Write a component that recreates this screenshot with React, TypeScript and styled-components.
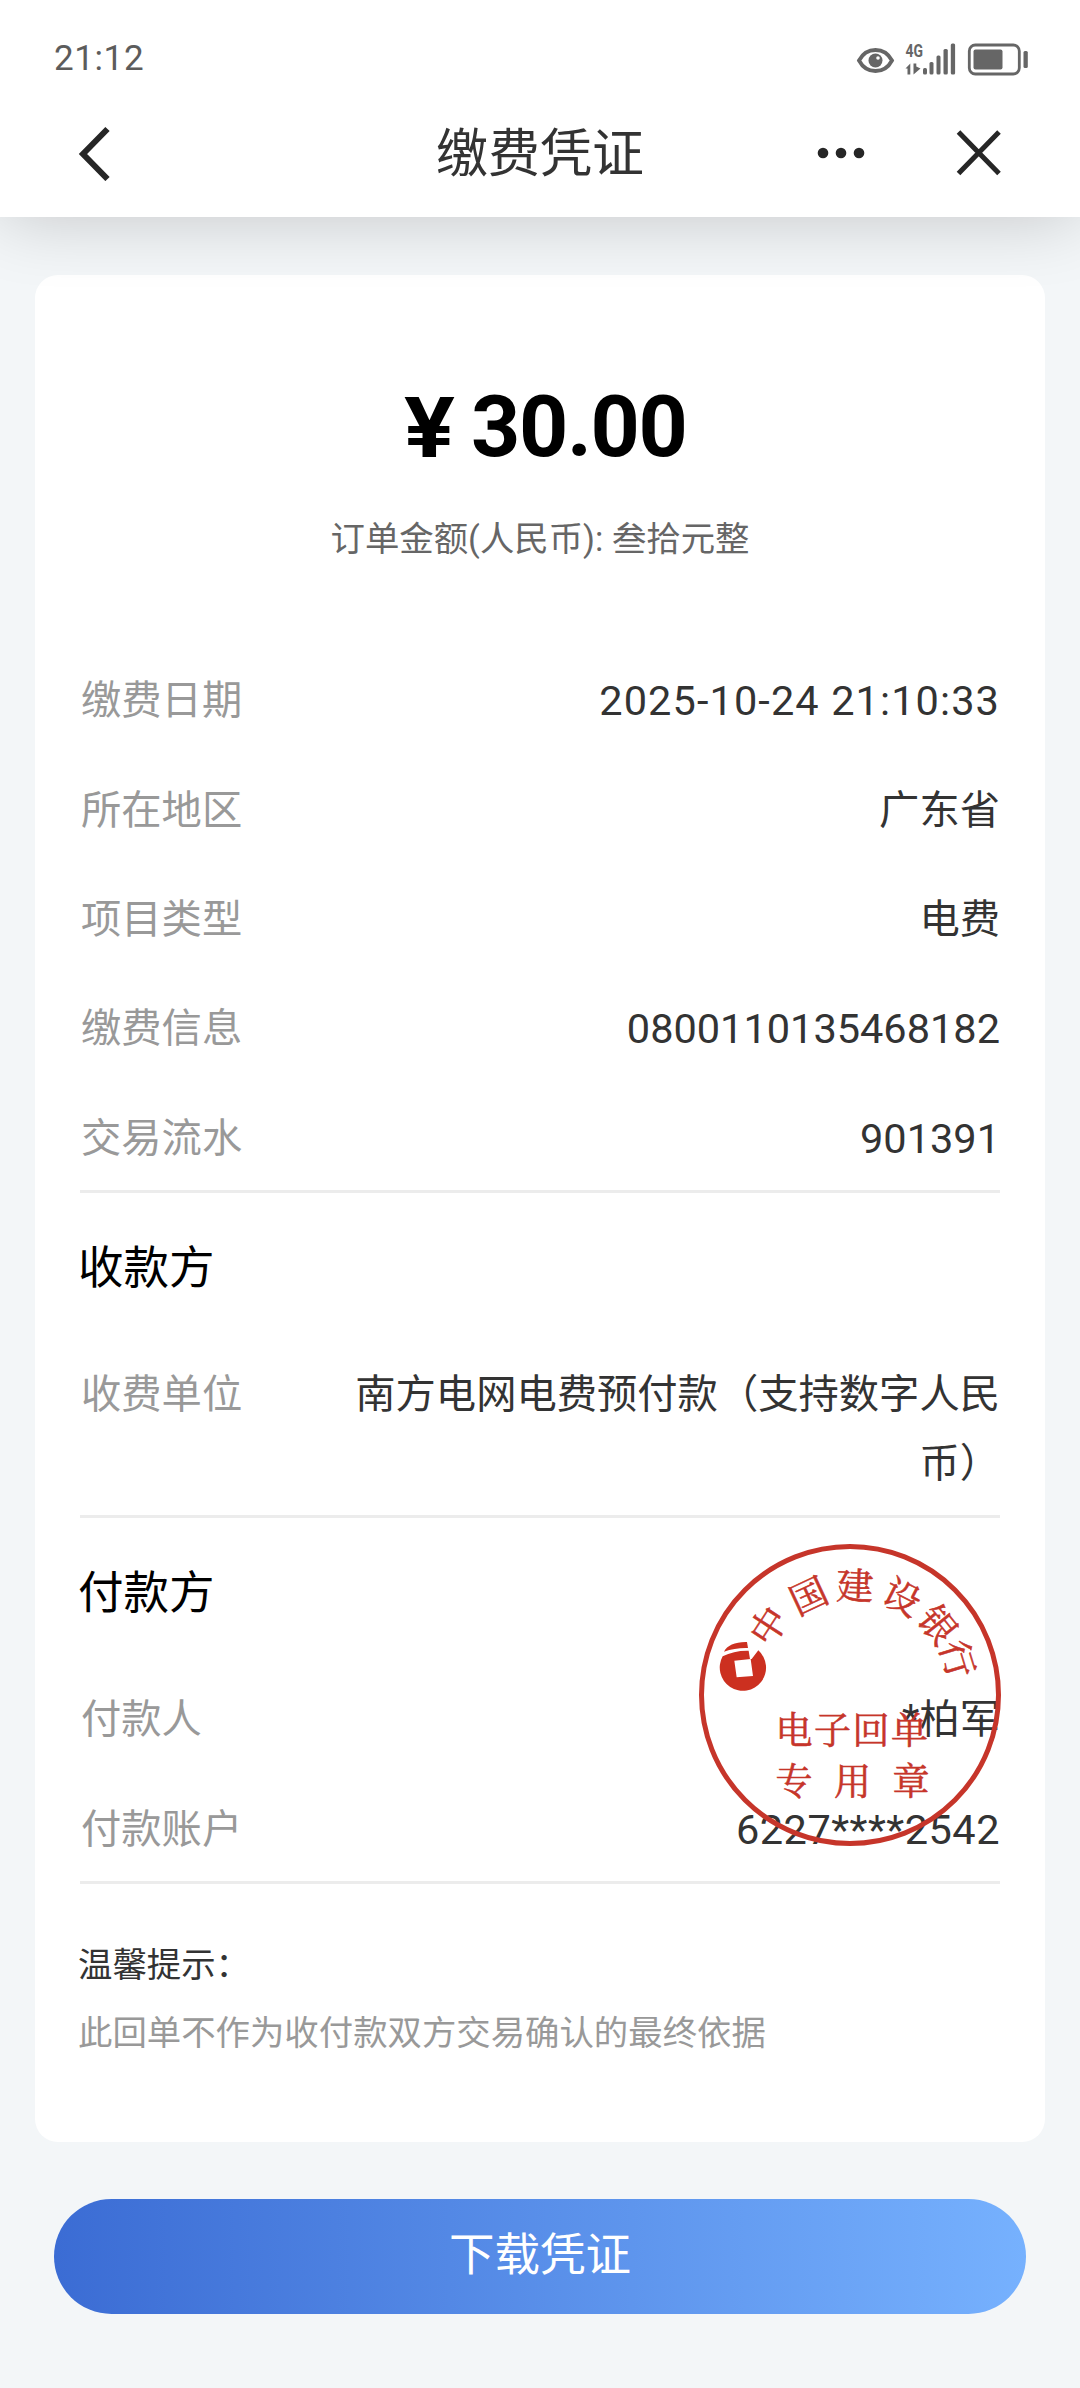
import React, { FC } from 'react'
import styled, { createGlobalStyle } from 'styled-components'

interface IRow {
	label: string
	value: string
	fontSize?: number
	spacing?: number
}

interface ISealChar {
	char: string
	x: number
	y: number
	angle: number
}

const paymentRows: IRow[] = [
	{ label: '缴费日期', value: '2025-10-24 21:10:33', fontSize: 41.5, spacing: 1.1 },
	{ label: '所在地区', value: '广东省' },
	{ label: '项目类型', value: '电费' },
	{ label: '缴费信息', value: '0800110135468182', fontSize: 41.5 },
	{ label: '交易流水', value: '901391', fontSize: 41.5 },
]

const payeeRows: IRow[] = [{ label: '收费单位', value: '南方电网电费预付款（支持数字人民币）' }]

const payerRows: IRow[] = [
	{ label: '付款人', value: '*柏军' },
	{ label: '付款账户', value: '6227****2542', fontSize: 41.5, spacing: 0.5 },
]

const sealChars: ISealChar[] = [
	{ char: '中', x: 69.5, y: 82, angle: -57 },
	{ char: '国', x: 109.5, y: 52, angle: -25 },
	{ char: '建', x: 156, y: 42, angle: 2 },
	{ char: '设', x: 203, y: 53, angle: 27 },
	{ char: '银', x: 239, y: 81, angle: 51 },
	{ char: '行', x: 258.5, y: 115, angle: 73 },
]

const StatusIcons: FC = () => (
	<StatusSvg viewBox="0 0 172 34">
		<path
			d="M3 18.5C7 11 13.5 8 19.5 8S32 11 36 18.5C32 26 25.5 29 19.5 29S7 26 3 18.5Z"
			fill="none"
			stroke="#666"
			strokeWidth="3.8"
		/>
		<circle cx="19.5" cy="18.5" r="7" fill="#666" />
		<circle cx="22" cy="16" r="1.8" fill="#fff" />
		<SignalText x="49.5" y="15.3" textLength="17.5" lengthAdjust="spacingAndGlyphs">
			4G
		</SignalText>
		<path d="M49.5 26.5 54.3 21.5V32.5H51.5V26.5ZM57.5 21.5H60.3V24.5L64.5 26.5 57.5 32.5Z" fill="#666" />
		<g fill="#666">
			<rect x="67" y="26" width="4" height="6.5" rx="1.5" />
			<rect x="73.5" y="20" width="4" height="12.5" rx="1.5" />
			<rect x="80.5" y="13.5" width="4" height="19" rx="1.5" />
			<rect x="87.5" y="7" width="4.3" height="25.5" rx="1.5" />
			<rect x="94.8" y="1.5" width="4.3" height="31" rx="1.5" />
		</g>
		<rect x="113.3" y="3" width="50" height="29" rx="6" fill="none" stroke="#666" strokeWidth="2.8" />
		<rect x="117.5" y="7.5" width="29" height="20" rx="2" fill="#666" />
		<rect x="167.5" y="9" width="4.3" height="17" rx="1.5" fill="#666" />
	</StatusSvg>
)

const BackIcon: FC = () => (
	<svg width="32" height="56" viewBox="0 0 32 56">
		<path d="M29.5 4 5 29 29.5 54" fill="none" stroke="#262626" strokeWidth="6" />
	</svg>
)

const MoreIcon: FC = () => (
	<svg width="48" height="12" viewBox="0 0 48 12" fill="#262626">
		<circle cx="6" cy="6" r="5.3" />
		<circle cx="24" cy="6" r="5.3" />
		<circle cx="42" cy="6" r="5.3" />
	</svg>
)

const CloseIcon: FC = () => (
	<svg width="46" height="46" viewBox="0 0 46 46">
		<path d="M2.5 2 43 43.5M43 2 2.5 43.5" stroke="#262626" strokeWidth="5" />
	</svg>
)

const Seal: FC = () => (
	<SealBox viewBox="0 0 304 304">
		<circle cx="151" cy="151" r="148.5" fill="none" stroke="#c6352a" strokeWidth="5" />
		<g transform="translate(-20 36) scale(.3333)">
			<path d="M135 215C144 196 170 185 204 186L207 204C183 203 158 207 135 215Z" fill="#cc3020" />
			<path
				fillRule="evenodd"
				d="M131 229Q165 211 209 212L213 237H218L238 211A69.5 69.5 0 1 1 131 229ZM166 242 173 292 222 288 215 237Z"
				fill="#cc3020"
			/>
		</g>
		{sealChars.map(item => (
			<SealText
				key={item.char}
				transform={`translate(${item.x} ${item.y}) rotate(${item.angle})`}
				y="13.5">
				{item.char}
			</SealText>
		))}
		{['电', '子', '回', '单'].map((char, index) => (
			<SealText key={char} x={95 + index * 38.5} y="199.5">
				{char}
			</SealText>
		))}
		{['专', '用', '章'].map((char, index) => (
			<SealText key={char} x={95 + index * 58.5} y="251">
				{char}
			</SealText>
		))}
	</SealBox>
)

const Rows: FC<{ items: IRow[] }> = ({ items }) => (
	<RowList>
		{items.map(item => (
			<Row key={item.label}>
				<Label>{item.label}</Label>
				<Value $fontSize={item.fontSize} $spacing={item.spacing}>
					{item.value}
				</Value>
			</Row>
		))}
	</RowList>
)

const App: FC = () => {
	return (
		<Root>
			<GlobalStyle />
			<Header>
				<StatusBar>
					<Time>21:12</Time>
					<StatusIcons />
				</StatusBar>
				<NavBar>
					<NavSide>
						<IconButton aria-label="返回">
							<BackIcon />
						</IconButton>
					</NavSide>
					<Title>缴费凭证</Title>
					<NavSide $end>
						<IconButton aria-label="更多">
							<MoreIcon />
						</IconButton>
						<IconButton aria-label="关闭">
							<CloseIcon />
						</IconButton>
					</NavSide>
				</NavBar>
			</Header>
			<Card>
				<Amount>
					<Currency>¥</Currency>
					30.00
				</Amount>
				<AmountText>订单金额(人民币): 叁拾元整</AmountText>
				<Section>
					<Rows items={paymentRows} />
				</Section>
				<Section>
					<SectionTitle>收款方</SectionTitle>
					<Rows items={payeeRows} />
				</Section>
				<Section>
					<SectionTitle>付款方</SectionTitle>
					<Rows items={payerRows} />
					<Seal />
				</Section>
				<Tip>
					<TipTitle>温馨提示：</TipTitle>
					<TipText>此回单不作为收付款双方交易确认的最终依据</TipText>
				</Tip>
			</Card>
			<DownloadButton>下载凭证</DownloadButton>
		</Root>
	)
}

export default App

const GlobalStyle = createGlobalStyle`
	* {
		box-sizing: border-box;
	}

	body {
		margin: 0;
		background-color: #f3f6f8;
		font-family: Roboto, 'Noto Sans CJK SC', sans-serif;
	}

	button {
		border: 0;
		padding: 0;
		background: none;
		font-family: inherit;
	}

	svg {
		display: block;
	}
`

const Root = styled.div`
	display: flex;
	flex-direction: column;
	width: 1080px;
	min-height: 2388px;
	background-color: #f3f6f8;
	overflow: hidden;
`

const Header = styled.header`
	position: relative;
	z-index: 1;
	height: 217px;
	background-color: #fff;
	box-shadow: 0 0 72px rgba(0, 0, 0, 0.2);
`

const StatusBar = styled.div`
	display: flex;
	justify-content: space-between;
	align-items: center;
	height: 92px;
	padding: 25px 52px 0 54px;
`

const StatusSvg = styled.svg`
	width: 172px;
	height: 34px;
	overflow: visible;
`

const Time = styled.span`
	padding-top: 1px;
	color: #5c5c5c;
	font-size: 35px;
	line-height: 40px;
	letter-spacing: 0.6px;
`

const NavBar = styled.div`
	display: flex;
	align-items: center;
	height: 121px;
	padding: 0 78px;
`

const NavSide = styled.div<{ $end?: boolean }>`
	display: flex;
	flex: 1;
	align-items: center;
	justify-content: ${({ $end }) => ($end ? 'flex-end' : 'flex-start')};
	gap: 91px;
`

const Title = styled.h1`
	margin: 0;
	padding-top: 5px;
	color: #333;
	font-size: 52px;
	font-weight: 400;
	line-height: 64px;
`

const IconButton = styled.button`
	display: flex;
`

const Card = styled.main`
	height: 1867px;
	margin: 58px 35px 0;
	padding: 98px 45px 0;
	border-radius: 23px;
	background-color: #fff;
`

const Amount = styled.div`
	display: flex;
	justify-content: center;
	gap: 20px;
	height: 104px;
	padding-left: 12px;
	font-size: 86px;
	font-weight: 700;
	line-height: 108px;
	letter-spacing: -1.4px;
`

const Currency = styled.span`
	padding-top: 1px;
	font-family: Inter, sans-serif;
	font-size: 82px;
	transform: scaleX(1.12);
`

const AmountText = styled.p`
	margin: 30px 0 75px;
	color: #666;
	font-size: 34.4px;
	line-height: 64px;
	text-align: center;
`

const Section = styled.section`
	position: relative;
	border-bottom: 3px solid #ececec;
`

const SectionTitle = styled.h2`
	margin: 0 0 0 -2px;
	padding: 43px 0 38px;
	color: #000;
	font-size: 45.5px;
	font-weight: 400;
	line-height: 66px;
`

const RowList = styled.div`
	margin-bottom: -3px;
	padding-left: 1px;
`

const Row = styled.div`
	display: flex;
	justify-content: space-between;
	padding: 20.2px 0;
	font-size: 40.3px;
	line-height: 69px;
`

const Label = styled.span`
	color: #999;
`

const Value = styled.span<{ $fontSize?: number; $spacing?: number }>`
	max-width: 660px;
	color: #333;
	font-size: ${({ $fontSize }) => $fontSize ?? 40.3}px;
	letter-spacing: ${({ $spacing }) => $spacing ?? 0}px;
	text-align: right;
`

const SealBox = styled.svg`
	position: absolute;
	top: 26px;
	right: -3px;
	width: 304px;
	height: 304px;
`

const SealText = styled.text`
	fill: #c6352a;
	stroke: #c6352a;
	stroke-width: 0.6px;
	font-family: 'Noto Serif CJK SC', 'Noto Sans CJK SC', serif;
	font-size: 37px;
	font-weight: 400;
	text-anchor: middle;
`

const SignalText = styled.text`
	fill: #666;
	font-size: 18px;
	font-weight: 700;
`

const Tip = styled.div`
	margin-left: -2px;
	padding-top: 47px;
	font-size: 34.4px;
	line-height: 68px;
`

const TipTitle = styled.div`
	color: #333;
`

const TipText = styled.div`
	color: #999;
`

const DownloadButton = styled.button`
	height: 115px;
	margin: 57px 54px 0;
	padding-bottom: 2px;
	border-radius: 58px;
	background-image: linear-gradient(90deg, #3b6cd4, #76b1fe);
	color: #fff;
	font-size: 45.5px;
	line-height: 108px;
`
